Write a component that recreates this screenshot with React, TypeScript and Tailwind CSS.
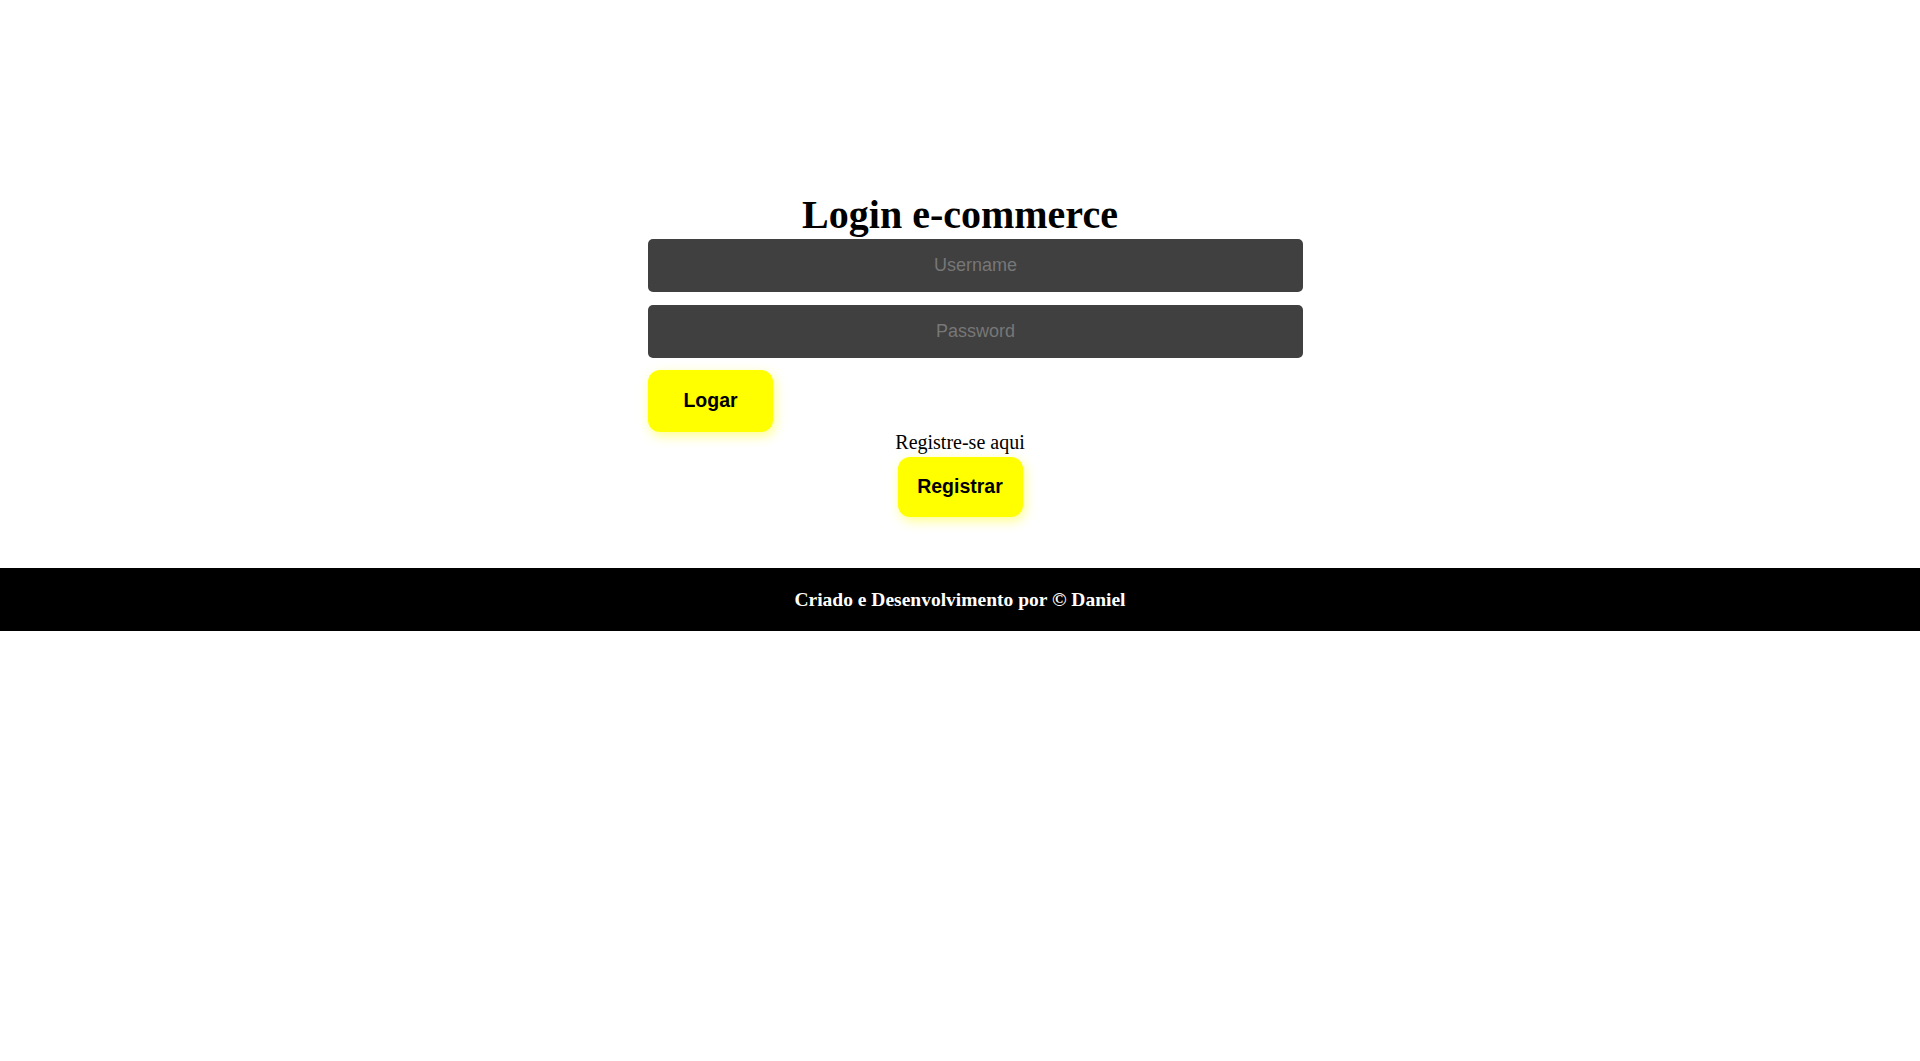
import { useState } from "react";

export default function App() {
  const [username, setUsername] = useState("");
  const [password, setPassword] = useState("");

  return (
    <div className="min-h-[1061px] bg-white font-['Liberation_Serif',serif] text-[20px] text-black">
      {/* Login form */}
      <main className="pt-[192px] pb-[51px]">
        <div className="mx-auto w-[624px] flex flex-col">
          <h1 className="text-center text-[40px] leading-[46px] font-bold">Login e-commerce</h1>
          <input
            type="text"
            value={username}
            onChange={(e) => setUsername(e.target.value)}
            placeholder="Username"
            className="mt-[1px] w-[655px] h-[53px] rounded-[5px] bg-[#404040] text-center text-[18px] text-gray-200 font-['Liberation_Sans',Arial,sans-serif] placeholder-[#777777] outline-none"
          />
          <input
            type="password"
            value={password}
            onChange={(e) => setPassword(e.target.value)}
            placeholder="Password"
            className="mt-[13px] w-[655px] h-[53px] rounded-[5px] bg-[#404040] text-center text-[18px] text-gray-200 font-['Liberation_Sans',Arial,sans-serif] placeholder-[#777777] outline-none"
          />
          <button
            type="button"
            className="mt-[12px] w-[125px] h-[62px] rounded-[12px] bg-[#ffff00] text-[19.5px] font-bold font-['Liberation_Sans',Arial,sans-serif] shadow-[2px_4px_12px_rgba(255,255,0,0.45)]"
          >
            Logar
          </button>
          <p className="text-center leading-[23px] mt-[-1px]">Registre-se aqui</p>
          <button
            type="button"
            className="self-center mt-[3px] w-[125px] h-[60px] rounded-[12px] bg-[#ffff00] text-[19.5px] font-bold font-['Liberation_Sans',Arial,sans-serif] shadow-[2px_4px_12px_rgba(255,255,0,0.45)]"
          >
            Registrar
          </button>
        </div>
      </main>

      {/* Footer */}
      <footer className="h-[63px] bg-black flex items-center justify-center">
        <p className="text-white font-bold text-[19.5px]">Criado e Desenvolvimento por © Daniel</p>
      </footer>
    </div>
  );
}
